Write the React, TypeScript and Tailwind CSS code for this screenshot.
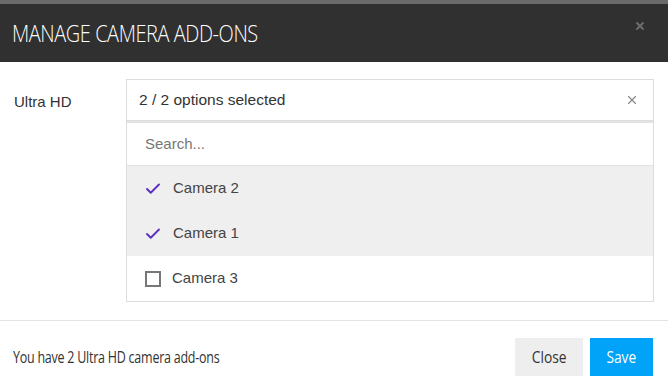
import { Check, X } from "lucide-react";

const cameras = [
  { name: "Camera 2", checked: true },
  { name: "Camera 1", checked: true },
  { name: "Camera 3", checked: false },
];

export default function App() {
  return (
    <div className="w-[668px] h-[388px] bg-white overflow-hidden font-['Liberation_Sans',Arial,sans-serif]">
      <div className="h-[4px] bg-[#6a6a6a]" />
      <div className="h-[58px] bg-[#303030] flex items-center justify-between pl-[12px] pr-[22px]">
        <h1 className="text-white text-[24px] font-light tracking-[-0.5px] font-['Open_Sans',sans-serif] leading-none origin-left scale-x-[0.83] whitespace-nowrap">
          MANAGE CAMERA ADD-ONS
        </h1>
        <X className="w-[12px] h-[12px] text-[#6c6c6c] -mt-[14px]" strokeWidth={4} />
      </div>

      <div className="flex pt-[17px] pl-[14px] pr-[14px]">
        <div className="w-[112px] pt-[12px] text-[15px] text-[#333]">Ultra HD</div>
        <div className="flex-1">
          <div className="h-[42px] border border-[#ddd] flex items-center justify-between pl-[12px] pr-[14px]">
            <span className="text-[15.5px] text-[#333]">2 / 2 options selected</span>
            <X className="w-[14px] h-[14px] text-[#888]" strokeWidth={2} />
          </div>
          <div className="border border-t-0 border-[#ddd]">
            <div className="h-[45px] flex items-center pl-[18px] border-t-2 border-b border-[#e2e2e2]">
              <span className="text-[15px] text-[#777]">Search...</span>
            </div>
            {cameras.map((c) => (
              <div
                key={c.name}
                className={`h-[45px] flex items-center pl-[17px] ${c.checked ? "bg-[#efefef]" : "bg-white"}`}
              >
                {c.checked ? (
                  <Check className="w-[18px] h-[18px] text-[#5b2fbf]" strokeWidth={2.5} />
                ) : (
                  <span className="w-[16px] h-[16px] border-2 border-[#777] ml-[1px]" />
                )}
                <span className="ml-[11px] text-[15px] text-[#444]">{c.name}</span>
              </div>
            ))}
          </div>
        </div>
      </div>

      <div className="mt-[18px] border-t border-[#e3e3e3]" />
      <div className="flex items-center justify-between pl-[13px] pr-[15px] pt-[17px]">
        <span className="text-[16px] text-[#333] font-['Open_Sans',sans-serif] tracking-[-0.3px] origin-left scale-x-[0.78] whitespace-nowrap">
          You have 2 Ultra HD camera add-ons
        </span>
        <div className="flex gap-[7px]">
          <button className="h-[38px] w-[68px] bg-[#eeeeee] text-[#333] text-[16px] font-['Open_Sans',sans-serif]">
            <span className="inline-block scale-x-[0.86]">Close</span>
          </button>
          <button className="h-[38px] w-[63px] bg-[#00a3f7] text-white text-[16px] font-['Open_Sans',sans-serif]">
            <span className="inline-block scale-x-[0.86]">Save</span>
          </button>
        </div>
      </div>
    </div>
  );
}
